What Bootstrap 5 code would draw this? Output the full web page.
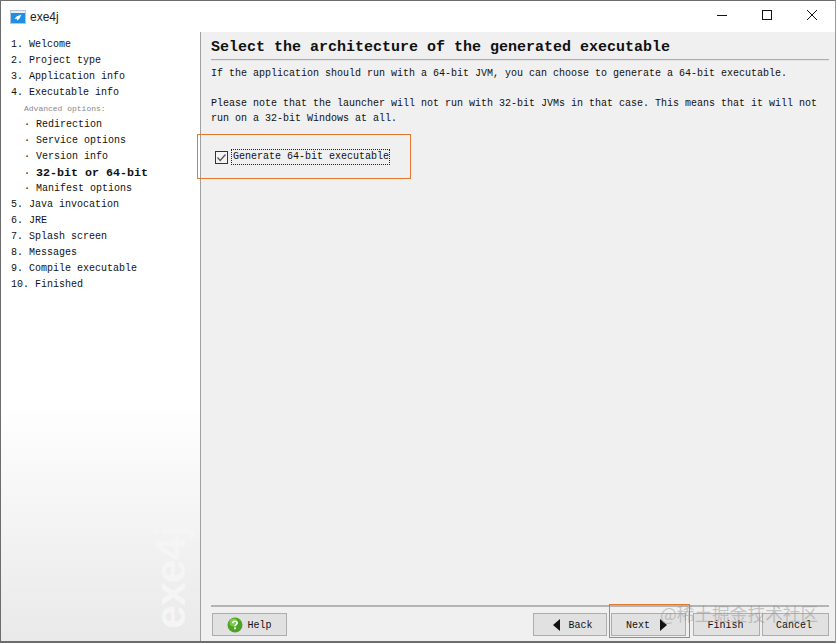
<!DOCTYPE html>
<html lang="en">
<head>
    <meta charset="UTF-8">
    <title>exe4j</title>
    <link href="https://cdn.jsdelivr.net/npm/bootstrap@5.3.3/dist/css/bootstrap.min.css" rel="stylesheet">
    <style>
        html, body { height: 100%; margin: 0; }
        body { background: #fff; overflow: hidden; font-family: "Liberation Mono", monospace; font-size: 10px; color: #111; line-height: 16px; }
        .win { height: 643px; border: 1px solid #6d6d6d; border-bottom-width: 2px; border-right-color: #9a9a9a; }
        .titlebar { height: 31px; padding-left: 9px; padding-right: 1px; flex-shrink: 0; }
        .titlebar-name { font-family: "Liberation Sans", sans-serif; font-size: 12px; margin-left: 4px; color: #222; }
        .win-ctl { width: 45px; height: 28px; }
        .body-row { height: 609px; }
        .steps { width: 200px; border-right: 1px solid #a0a0a0; background: linear-gradient(#fff 0, #fff 60%, #e9e9e9 100%); padding: 5px 0 0 10px; overflow: hidden; }
        .steps ol { margin: 0; padding: 0; list-style: none; }
        .steps li { height: 16px; white-space: pre; }
        .steps .adv { font-size: 8px; color: #888; padding-left: 13px; }
        .steps .sub { padding-left: 1px; }
        .steps .cur { font-weight: 700; font-size: 11.67px; }
        .wm-logo { position: absolute; left: 120px; top: 557px; transform: rotate(-90deg); font-family: "Liberation Sans", sans-serif; font-weight: 700; font-size: 43px; line-height: 44px; color: #f5f5f5; letter-spacing: -1px; width: 100px; text-align: center; }
        .pane { background: #f0f0f0; padding: 7px 6px 5px 10px; }
        .pane-title { font-size: 15px; font-weight: 700; line-height: 18px; margin: 0 0 2px; color: #111; }
        .rule { height: 2px; background: #adadad; border-bottom: 1px solid #e4e4e4; margin-bottom: 5px; }
        .pane-text { margin: 0; line-height: 15px; }
        .pane-text.first { margin-bottom: 15px; }
        .gen { margin-top: 23px; padding-left: 4px; height: 16px; }
        .chk { width: 13px; height: 13px; margin-right: 3px; }
        .gen-label { border: 1px dotted #222; padding: 0 0 0 1px; line-height: 14px; }
        .bottom-rule { height: 2px; background: #b4b4b4; margin-bottom: 6px; }
        .btn-row { padding-left: 1px; }
        .win-btn { height: 23px; padding: 1px 0 0; border: 1px solid #adadad; border-radius: 0; background: #e1e1e1; color: #111; font-size: 10px; line-height: 21px; display: flex; align-items: center; justify-content: center; }
        .b-help { width: 75px; }
        .b-back { width: 74px; padding-left: 6px; }
        .b-next { width: 75px; margin-left: 4px; padding-right: 4px; }
        .b-next svg { margin-left: 10px; }
        .b-finish { width: 67px; margin-left: 7px; padding-right: 2px; }
        .b-cancel { width: 67px; margin-left: 2px; padding-right: 3px; }
        .note-box { position: absolute; border: 1px solid #e0782f; }
        .note-a { left: 197px; top: 134px; width: 214px; height: 45px; }
        .note-b { left: 609px; top: 604px; width: 81px; height: 34px; }
        .site-mark { position: absolute; left: 660px; top: 601px; font-family: "Noto Sans CJK SC", sans-serif; font-size: 17.7px; line-height: 24px; color: rgba(150, 150, 150, .5); white-space: nowrap; }
    </style>
</head>
<body>

    <div class="win d-flex flex-column">
        <div class="titlebar d-flex align-items-center">
            <svg width="16" height="14" viewBox="0 0 16 14">
                <rect x=".5" y=".5" width="15" height="13" fill="#1e8fe6" stroke="#b9c6d2"/>
                <rect x="1" y="1" width="14" height="2" fill="#e8eef4"/>
                <path d="M11.5 4.5 L6.5 6.5 L4.5 9 L6.5 8.8 L7.4 10.6 L9.5 8.5 Z" fill="#fff"/>
            </svg>
            <span class="titlebar-name">exe4j</span>
            <div class="ms-auto d-flex align-self-start">
                <div class="win-ctl d-flex align-items-center justify-content-center">
                    <svg width="12" height="12" viewBox="0 0 12 12"><path d="M1 6.5H11" stroke="#111" fill="none"/></svg>
                </div>
                <div class="win-ctl d-flex align-items-center justify-content-center">
                    <svg width="12" height="12" viewBox="0 0 12 12"><rect x="1.5" y="1.5" width="9" height="9" stroke="#111" fill="none"/></svg>
                </div>
                <div class="win-ctl d-flex align-items-center justify-content-center">
                    <svg width="12" height="12" viewBox="0 0 12 12"><path d="M1 1L11 11M11 1L1 11" stroke="#111" fill="none"/></svg>
                </div>
            </div>
        </div>

        <div class="body-row d-flex">
            <div class="steps flex-shrink-0">
                <ol>
                    <li>1. Welcome</li>
                    <li>2. Project type</li>
                    <li>3. Application info</li>
                    <li>4. Executable info</li>
                    <li class="adv">Advanced options:</li>
                    <li class="sub">  · Redirection</li>
                    <li class="sub">  · Service options</li>
                    <li class="sub">  · Version info</li>
                    <li class="sub">  · <span class="cur">32-bit or 64-bit</span></li>
                    <li class="sub">  · Manifest options</li>
                    <li>5. Java invocation</li>
                    <li>6. JRE</li>
                    <li>7. Splash screen</li>
                    <li>8. Messages</li>
                    <li>9. Compile executable</li>
                    <li>10. Finished</li>
                </ol>
            </div>

            <div class="pane flex-grow-1 d-flex flex-column">
                <h1 class="pane-title">Select the architecture of the generated executable</h1>
                <div class="rule"></div>
                <p class="pane-text first">If the application should run with a 64-bit JVM, you can choose to generate a 64-bit executable.</p>
                <p class="pane-text">Please note that the launcher will not run with 32-bit JVMs in that case. This means that it will not run on a 32-bit Windows at all.</p>
                <div class="gen d-flex align-items-center">
                    <svg class="chk" viewBox="0 0 13 13">
                        <rect x=".5" y=".5" width="12" height="12" fill="#f4f4f4" stroke="#333"/>
                        <path d="M2.5 6.5L5.2 9.5L10.5 3.5" fill="none" stroke="#555" stroke-width="1.3"/>
                    </svg>
                    <span class="gen-label">Generate 64-bit executable</span>
                </div>

                <div class="mt-auto">
                    <div class="bottom-rule"></div>
                    <div class="btn-row d-flex">
                        <button class="btn win-btn b-help" type="button">
                            <svg class="me-1" width="16" height="16" viewBox="0 0 16 16">
                                <circle cx="8" cy="8" r="7.5" fill="#4ea326"/>
                                <circle cx="6.5" cy="5.5" r="4" fill="#7cc94a"/>
                                <path d="M5.8 6.2C5.8 3.6 10.2 3.6 10.2 6.1C10.2 7.6 8 7.6 8 9.3" fill="none" stroke="#fff" stroke-width="1.7"/>
                                <rect x="7.1" y="10.4" width="1.8" height="1.8" fill="#fff"/>
                            </svg>
                            Help
                        </button>
                        <button class="btn win-btn b-back ms-auto" type="button">
                            <svg class="me-2" width="7" height="12" viewBox="0 0 7 12"><path d="M7 0V12L0 6Z" fill="#111"/></svg>
                            Back
                        </button>
                        <button class="btn win-btn b-next" type="button">
                            Next
                            <svg width="7" height="12" viewBox="0 0 7 12"><path d="M0 0V12L7 6Z" fill="#111"/></svg>
                        </button>
                        <button class="btn win-btn b-finish" type="button">Finish</button>
                        <button class="btn win-btn b-cancel" type="button">Cancel</button>
                    </div>
                </div>
            </div>
        </div>
    </div>

    <div class="wm-logo">exe4j</div>
    <div class="note-box note-a"></div>
    <div class="note-box note-b"></div>
    <div class="site-mark">@稀土掘金技术社区</div>

    <script src="https://cdn.jsdelivr.net/npm/bootstrap@5.3.3/dist/js/bootstrap.bundle.min.js"></script>
</body>
</html>
